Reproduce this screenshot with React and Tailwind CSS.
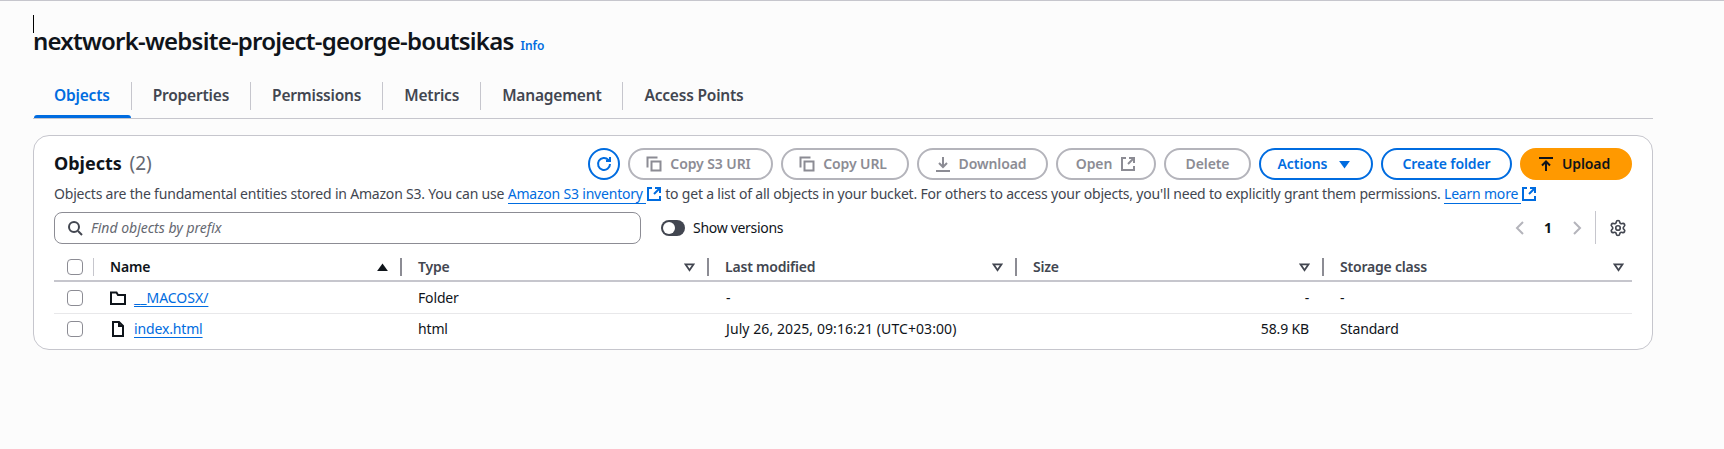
// App.jsx
import { Settings } from "lucide-react";

const Icon = ({ children, className = "" }) => (
  <svg
    viewBox="0 0 16 16"
    fill="none"
    stroke="currentColor"
    strokeWidth="2"
    className={`w-4 h-4 shrink-0 ${className}`}
  >
    {children}
  </svg>
);

const CopyIcon = () => (
  <Icon>
    <path d="M5.5 5.5h9v9h-9z" />
    <path d="M1.5 11.5v-10h10" />
  </Icon>
);

const ExternalIcon = ({ className = "" }) => (
  <Icon className={className}>
    <path d="M14 7V2H9" />
    <path d="M14 2 8 8" />
    <path d="M6 2H2v12h12v-4" />
  </Icon>
);

const FilterCaret = () => (
  <svg viewBox="0 0 12 10" className="w-[11px] h-[9px] text-[#424650]" fill="none" stroke="currentColor" strokeWidth="2">
    <path d="M1.5 1.5h9L6 8z" />
  </svg>
);

const Separator = ({ className = "" }) => <div className={`w-0.5 h-[18px] bg-[#8c8c94] ${className}`} />;

const tabs = ["Objects", "Properties", "Permissions", "Metrics", "Management", "Access Points"];

const Tabs = () => (
  <div className="flex h-[38px] mt-[24px] border-b border-[#c6c6cd]">
    {tabs.map((tab, i) => (
      <div key={tab} className="relative h-[37px] flex items-start">
        <div
          className={`h-7 mt-[1px] flex items-center font-semibold text-[15.5px] tracking-[-0.2px] ${
            i === 0 ? "px-[21px] text-[#006ce0]" : "px-[21px] text-[#424650]"
          } ${i < tabs.length - 1 ? "border-r border-[#c6c6cd]" : ""}`}
        >
          {tab}
        </div>
        {i === 0 && <div className="absolute left-[1px] right-[1px] bottom-0 h-[3px] rounded-t bg-[#006ce0]" />}
      </div>
    ))}
  </div>
);

const Btn = ({ children, className = "" }) => (
  <button
    className={`h-8 flex items-center justify-center gap-2 rounded-full border-2 text-sm font-semibold tracking-[-0.1px] ${className}`}
  >
    {children}
  </button>
);

const disabled = "border-[#b4b4bb] text-[#8c8c94]";
const primaryOutline = "border-[#006ce0] text-[#006ce0]";

const Toolbar = () => (
  <div className="flex items-center gap-2">
    <button className="w-8 h-8 flex items-center justify-center rounded-full border-2 border-[#006ce0] text-[#006ce0]">
      <Icon>
        <path d="M10 5h4V1" />
        <path d="M14 8a6 6 0 1 1-1.6-4.1L14 5" />
      </Icon>
    </button>
    <Btn className={`w-[145px] pr-1 ${disabled}`}>
      <CopyIcon />
      Copy S3 URI
    </Btn>
    <Btn className={`w-[128px] pr-1 ${disabled}`}>
      <CopyIcon />
      Copy URL
    </Btn>
    <Btn className={`w-[131px] pr-1 ${disabled}`}>
      <Icon>
        <path d="M8 1v10" />
        <path d="M4 7l4 4 4-4" />
        <path d="M1 15h14" />
      </Icon>
      Download
    </Btn>
    <Btn className={`w-[100px] ${disabled}`}>
      Open
      <ExternalIcon />
    </Btn>
    <Btn className={`w-[87px] ${disabled}`}>Delete</Btn>
    <Btn className={`w-[114px] pr-1 ${primaryOutline}`}>
      Actions
      <svg viewBox="0 0 12 10" className="w-[11px] h-[9px] ml-1" fill="currentColor">
        <path d="M0 1h12L6 9.5z" />
      </svg>
    </Btn>
    <Btn className={`w-[131px] ${primaryOutline}`}>Create folder</Btn>
    <Btn className="w-[112px] pr-1 bg-[#ff9900] border-[#ff9900] text-[#0f141a] gap-2">
      <Icon>
        <path d="M1 2h14" />
        <path d="M8 15V6" />
        <path d="M4 9.5l4-4 4 4" />
      </Icon>
      Upload
    </Btn>
  </div>
);

const A = ({ children }) => (
  <a className="text-[#006ce0] underline decoration-1 underline-offset-[3px]">{children}</a>
);

// external links: the underline runs on under the gap before the icon
const ExtLink = ({ children }) => (
  <>
    <a className="self-start h-[20px] leading-[19px] pr-[3px] text-[#006ce0] border-b border-[#006ce0]">{children}</a>
    <ExternalIcon className="text-[#006ce0]" />
  </>
);

const Checkbox = () => <div className="w-4 h-4 rounded-[4px] border border-[#8c8c94] bg-white" />;

const columns = ["Name", "Type", "Last modified", "Size", "Storage class"];
const tableCols = "grid grid-cols-[47px_301px_307px_308px_307px_1fr]";

const HeaderRow = () => (
  <div className={`${tableCols} h-[24px] border-b-2 border-[#c6c6cd] items-start`}>
    <div className="h-[18px] flex items-center justify-between pl-[13px] pr-[7px]">
      <Checkbox />
      <div className="w-px h-[18px] bg-[#c6c6cd]" />
    </div>
    {columns.map((c, i) => (
      <div key={c} className={`h-[18px] flex items-center justify-between ${i === 0 ? "pl-[9px]" : "pl-[16px]"}`}>
        <span className={`text-sm font-semibold tracking-[-0.2px] ${i === 0 ? "text-[#0f141a]" : "text-[#424650]"}`}>
          {c}
        </span>
        <div className="flex items-center">
          {i === 0 ? (
            <svg viewBox="0 0 12 10" className="w-[11px] h-[9px] text-[#0f141a]" fill="currentColor">
              <path d="M6 0.5 12 9H0z" />
            </svg>
          ) : (
            <FilterCaret />
          )}
          {i < columns.length - 1 ? <Separator className="ml-3" /> : <div className="w-[8px]" />}
        </div>
      </div>
    ))}
  </div>
);

const Row = ({ icon, name, type, modified, size, storage, last }) => (
  <div
    className={`${tableCols} items-center text-sm tracking-[-0.15px] text-[#0f141a] ${
      last ? "h-[30px]" : "h-[32px] border-b border-[#e8e8ea]"
    }`}
  >
    <div className="pl-[13px]">
      <Checkbox />
    </div>
    <div className="pl-[9px] flex items-center gap-2">
      {icon}
      <A>{name}</A>
    </div>
    <div className="pl-[16px]">{type}</div>
    <div className="pl-[17px] tracking-[0.08px]">{modified}</div>
    <div className="text-right pr-[15px]">{size}</div>
    <div className="pl-[16px]">{storage}</div>
  </div>
);

export default function App() {
  return (
    <div className="relative min-h-[449px] bg-[#fcfcfc] border-t border-[#c6c6cd] pl-[33px] pr-[71px] font-['Noto_Sans',sans-serif] text-[#0f141a]">
      {/* text cursor left in the page */}
      <div className="absolute left-[33px] top-[14px] w-px h-[18px] bg-black" />

      <div className="flex items-baseline gap-[7px] pt-[24px]">
        <h1 className="text-[24px] leading-[32px] font-semibold tracking-[-0.78px]">
          nextwork-website-project-george-boutsikas
        </h1>
        <span className="text-xs font-semibold text-[#006ce0]">Info</span>
      </div>

      <Tabs />

      <div className="mt-[16px] h-[215px] rounded-2xl border border-[#c6c6cd] bg-white pt-3 px-5">
        <div className="flex items-center justify-between">
          <h2 className="text-[18px] font-bold leading-[30px] -mt-0.5">
            Objects <span className="ml-[3px] text-[19px] font-normal text-[#656871]">(2)</span>
          </h2>
          <Toolbar />
        </div>

        <p className="mt-[4px] h-5 text-sm leading-[20px] tracking-[-0.2px] text-[#424650] whitespace-nowrap flex items-center">
          Objects are the fundamental entities stored in Amazon S3. You can use&nbsp;
          <ExtLink>Amazon S3 inventory</ExtLink>
          &nbsp;to get a list of all objects in your bucket. For others to access your objects, you'll need to
          explicitly grant them permissions.&nbsp;
          <ExtLink>Learn more</ExtLink>
        </p>

        <div className="mt-[7px] flex items-center h-[33px]">
          <div className="w-[587px] h-8 rounded-lg border border-[#8c8c94] flex items-center gap-2 pl-3 text-sm italic text-[#656871]">
            <Icon className="text-[#424650]">
              <circle cx="7" cy="7" r="5" />
              <path d="M11 11l4 4" />
            </Icon>
            Find objects by prefix
          </div>
          <div className="ml-5 w-6 h-4 rounded-full bg-[#424650] flex items-center pl-0.5">
            <div className="w-3 h-3 rounded-full bg-white" />
          </div>
          <span className="ml-2 text-sm tracking-[-0.3px]">Show versions</span>
          <div className="ml-auto flex items-center h-[33px] text-[#b4b4bb]">
            <svg viewBox="0 0 16 16" className="w-4 h-4" fill="none" stroke="currentColor" strokeWidth="2">
              <path d="M11 2 5 8l6 6" />
            </svg>
            <span className="ml-[16px] mr-[17px] text-sm font-bold text-[#0f141a]">1</span>
            <svg viewBox="0 0 16 16" className="w-4 h-4" fill="none" stroke="currentColor" strokeWidth="2">
              <path d="M5 2l6 6-6 6" />
            </svg>
            <div className="ml-[10px] w-px h-[33px] bg-[#c6c6cd]" />
            <Settings size={18} strokeWidth={2.2} className="ml-[13px] mr-[5px] text-[#424650]" />
          </div>
        </div>

        <div className="mt-[14px]">
          <HeaderRow />
          <Row
            icon={
              <Icon>
                <path d="M1 2.5h5.5L8 5h7v9H1z" />
              </Icon>
            }
            name={<span className="tracking-normal">__MACOSX/</span>}
            type="Folder"
            modified="-"
            size="-"
            storage="-"
          />
          <Row
            icon={
              <Icon>
                <path d="M3 1h6l4 4v10H3z" />
                <path d="M9 1v4h4" />
              </Icon>
            }
            name="index.html"
            type="html"
            modified="July 26, 2025, 09:16:21 (UTC+03:00)"
            size="58.9 KB"
            storage="Standard"
            last
          />
        </div>
      </div>
    </div>
  );
}
